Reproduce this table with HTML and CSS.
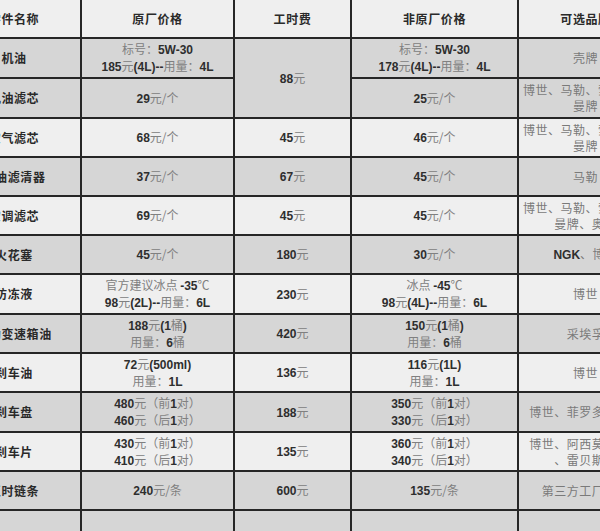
FILE: index.html
```html
<!DOCTYPE html>
<html lang="zh">
<head>
<meta charset="utf-8">
<title>保养配件价格表</title>
<link rel="stylesheet" href="styles.css">
</head>
<body>
<div class="sheet">
  <div class="row light head">
    <div class="c name">零件名称</div>
    <div class="c name">原厂价格</div>
    <div class="c name">工时费</div>
    <div class="c name">非原厂价格</div>
    <div class="c name">可选品牌</div>
  </div>
  <div class="row dark">
    <div class="c name">机油</div>
    <div class="c"><span><span class="z">标号：</span>5W-30<br>185<span class="z">元</span>(4L)--<span class="z">用量：</span>4L</span></div>
    <div class="c span2"><span>88<span class="z">元</span></span></div>
    <div class="c"><span><span class="z">标号：</span>5W-30<br>178<span class="z">元</span>(4L)--<span class="z">用量：</span>4L</span></div>
    <div class="c brand">壳牌</div>
  </div>
  <div class="row dark">
    <div class="c name">机油滤芯</div>
    <div class="c"><span>29<span class="z">元/个</span></span></div>
    <div class="c"><span>25<span class="z">元/个</span></span></div>
    <div class="c brand">博世、马勒、索菲玛、<br>曼牌</div>
  </div>
  <div class="row light">
    <div class="c name">空气滤芯</div>
    <div class="c"><span>68<span class="z">元/个</span></span></div>
    <div class="c"><span>45<span class="z">元</span></span></div>
    <div class="c"><span>46<span class="z">元/个</span></span></div>
    <div class="c brand">博世、马勒、索菲玛、<br>曼牌</div>
  </div>
  <div class="row dark">
    <div class="c name">汽油滤清器</div>
    <div class="c"><span>37<span class="z">元/个</span></span></div>
    <div class="c"><span>67<span class="z">元</span></span></div>
    <div class="c"><span>45<span class="z">元/个</span></span></div>
    <div class="c brand">马勒</div>
  </div>
  <div class="row light">
    <div class="c name">空调滤芯</div>
    <div class="c"><span>69<span class="z">元/个</span></span></div>
    <div class="c"><span>45<span class="z">元</span></span></div>
    <div class="c"><span>45<span class="z">元/个</span></span></div>
    <div class="c brand">博世、马勒、索菲玛、<br>曼牌、奥盛</div>
  </div>
  <div class="row dark">
    <div class="c name">火花塞</div>
    <div class="c"><span>45<span class="z">元/个</span></span></div>
    <div class="c"><span>180<span class="z">元</span></span></div>
    <div class="c"><span>30<span class="z">元/个</span></span></div>
    <div class="c brand"><span><b class="lat">NGK</b>、博世</span></div>
  </div>
  <div class="row light">
    <div class="c name">防冻液</div>
    <div class="c"><span><span class="z">官方建议冰点 </span>-35<span class="z">℃</span><br>98<span class="z">元</span>(2L)--<span class="z">用量：</span>6L</span></div>
    <div class="c"><span>230<span class="z">元</span></span></div>
    <div class="c"><span><span class="z">冰点 </span>-45<span class="z">℃</span><br>98<span class="z">元</span>(4L)--<span class="z">用量：</span>6L</span></div>
    <div class="c brand">博世</div>
  </div>
  <div class="row dark">
    <div class="c name">自动变速箱油</div>
    <div class="c"><span>188<span class="z">元</span>(1<span class="z">桶</span>)<br><span class="z">用量：</span>6<span class="z">桶</span></span></div>
    <div class="c"><span>420<span class="z">元</span></span></div>
    <div class="c"><span>150<span class="z">元</span>(1<span class="z">桶</span>)<br><span class="z">用量：</span>6<span class="z">桶</span></span></div>
    <div class="c brand">采埃孚</div>
  </div>
  <div class="row light">
    <div class="c name">刹车油</div>
    <div class="c"><span>72<span class="z">元</span>(500ml)<br><span class="z">用量：</span>1L</span></div>
    <div class="c"><span>136<span class="z">元</span></span></div>
    <div class="c"><span>116<span class="z">元</span>(1L)<br><span class="z">用量：</span>1L</span></div>
    <div class="c brand">博世</div>
  </div>
  <div class="row dark">
    <div class="c name">刹车盘</div>
    <div class="c"><span>480<span class="z">元（前</span>1<span class="z">对）</span><br>460<span class="z">元（后</span>1<span class="z">对）</span></span></div>
    <div class="c"><span>188<span class="z">元</span></span></div>
    <div class="c"><span>350<span class="z">元（前</span>1<span class="z">对）</span><br>330<span class="z">元（后</span>1<span class="z">对）</span></span></div>
    <div class="c brand">博世、菲罗多、天合</div>
  </div>
  <div class="row light">
    <div class="c name">刹车片</div>
    <div class="c"><span>430<span class="z">元（前</span>1<span class="z">对）</span><br>410<span class="z">元（后</span>1<span class="z">对）</span></span></div>
    <div class="c"><span>135<span class="z">元</span></span></div>
    <div class="c"><span>360<span class="z">元（前</span>1<span class="z">对）</span><br>340<span class="z">元（后</span>1<span class="z">对）</span></span></div>
    <div class="c brand">博世、阿西莫、天合<br>、雷贝斯托</div>
  </div>
  <div class="row dark">
    <div class="c name">正时链条</div>
    <div class="c"><span>240<span class="z">元/条</span></span></div>
    <div class="c"><span>600<span class="z">元</span></span></div>
    <div class="c"><span>135<span class="z">元/条</span></span></div>
    <div class="c brand">第三方工厂生产</div>
  </div>
  <div class="row dark">
    <div class="c"></div>
    <div class="c"></div>
    <div class="c"></div>
    <div class="c"></div>
    <div class="c"></div>
  </div>
</div>
</body>
</html>
```
FILE: styles.css
```css
html, body {
  margin: 0;
  padding: 0;
  background: #ffffff;
  overflow: hidden;
}

.sheet {
  display: grid;
  grid-template-columns: 132px 151px 115px 165px 133px;
  grid-template-rows: 37px 38px 38px 37px 37px 37px 37px 38px 37px 37px 38px 37px 37px 40px;
  gap: 2px;
  width: max-content;
  margin-left: -52px;
  background: #262626;
}

.row {
  display: contents;
}

.c {
  display: flex;
  align-items: center;
  justify-content: center;
  text-align: center;
  font-family: "Liberation Sans", "Noto Sans CJK SC", sans-serif;
  font-size: 12px;
  font-weight: bold;
  line-height: 16px;
  color: #2e2e2e;
  white-space: nowrap;
}

.light .c {
  background: #efefef;
}

.dark .c {
  background: #d6d6d6;
}

.span2 {
  grid-row: span 2;
}

.z {
  font-family: "Noto Sans CJK SC", sans-serif;
  font-weight: normal;
  color: #808080;
}

.name {
  font-family: "Noto Sans CJK SC", sans-serif;
  font-weight: bold;
  letter-spacing: 0.6px;
  color: #2a2a2a;
}

.brand {
  font-family: "Noto Sans CJK SC", sans-serif;
  font-weight: normal;
  letter-spacing: 0.5px;
  color: #7a7a7a;
}

.lat {
  font-family: "Liberation Sans", sans-serif;
  font-weight: bold;
  color: #2e2e2e;
  letter-spacing: 0;
}
```
